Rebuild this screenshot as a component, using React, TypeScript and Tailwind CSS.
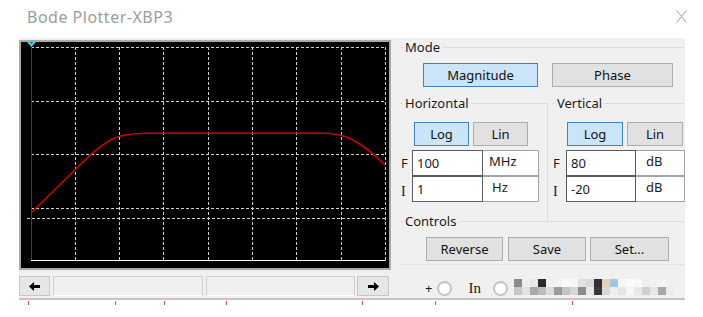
import React from "react";

const vGrid = [54.5, 98.5, 142.5, 187.5, 231.5, 275.5, 320.5, 364.5];
const hGrid = [5.5, 59.5, 112.5, 166.5];

const mosaicTop = [
  "bg-[#8a8a8a]", "bg-[#eeeeee]", "bg-[#e6e6e6]", "bg-[#2a2a2a]", "bg-[#f2f2f2]",
  "bg-[#f4f4f4]", "bg-[#fafafa]", "bg-[#f6f6f6]", "bg-[#e2e2e2]", "bg-[#d8d8d8]",
  "bg-[#303030]", "bg-[#e6d2b4]", "bg-[#9cc6ea]", "bg-[#f6f6f6]", "bg-[#fbfbfb]",
  "bg-[#f8f8f8]", "bg-[#eeeeee]", "bg-[#f2f2f2]", "bg-[#f4f4f4]", "bg-[#f0f0f0]",
];
const mosaicBottom = [
  "bg-[#c8c8c8]", "bg-[#e2e2e2]", "bg-[#a8a8a8]", "bg-[#bdbdbd]", "bg-[#dcdcdc]",
  "bg-[#9a9a9a]", "bg-[#c4c4c4]", "bg-[#d6d6d6]", "bg-[#8c8c8c]", "bg-[#e8e8e8]",
  "bg-[#3a3a3a]", "bg-[#d8d8d8]", "bg-[#eeeeee]", "bg-[#e4e4e4]", "bg-[#f6f6f6]",
  "bg-[#e8e8e8]", "bg-[#cfcfcf]", "bg-[#e6e6e6]", "bg-[#a8a8a8]", "bg-[#ececec]",
];

const ticks = [28, 86, 48, 61, 135, 72, 136];

function Btn({
  label,
  active,
  className,
}: {
  label: string;
  active?: boolean;
  className: string;
}) {
  return (
    <button
      className={`h-[24px] border text-[13px] leading-none text-[#111] ${
        active
          ? "border-[#3d84c8] bg-[#cce4f7]"
          : "border-[#adadad] bg-[#e1e1e1]"
      } ${className}`}
    >
      {label}
    </button>
  );
}

function Legend({ children }: { children: React.ReactNode }) {
  return (
    <legend className="ml-[3px] px-[2px] text-[13px] leading-[16px] text-[#1a1a1a]">
      {children}
    </legend>
  );
}

function Field({
  label,
  value,
  unit,
  labelW,
  valueW,
  unitW,
  unitPad,
}: {
  label: "F" | "I";
  value: string;
  unit: string;
  labelW: string;
  valueW: string;
  unitW: string;
  unitPad: string;
}) {
  return (
    <div className="flex h-[26px]">
      <span
        className={`${labelW} pl-[1px] text-[13px] ${
          label === "I"
            ? "pt-[7px] font-['Liberation_Serif',serif] text-[14px] leading-[18px]"
            : "pt-[4px] leading-[18px]"
        }`}
      >
        {label}
      </span>
      <div
        className={`${valueW} border border-[#5c5c5c] bg-white pl-[4px] pt-[3px] text-[13px] leading-[18px]`}
      >
        {value}
      </div>
      <div
        className={`${unitW} ${unitPad} border border-l-0 border-[#a4a4a4] bg-white pt-[1px] text-[13px] leading-[18px]`}
      >
        {unit}
      </div>
    </div>
  );
}

function Plot() {
  return (
    <div className="mt-[2px] h-[230px] w-[372px] border-2 border-[#a9a9a9] bg-black">
      <svg width="368" height="226" viewBox="0 0 368 226" className="block">
        <g stroke="#d2d2d2" strokeWidth="1" strokeDasharray="3 2">
          {vGrid.map((x) => (
            <line key={x} x1={x} y1="5" x2={x} y2="218" />
          ))}
          {hGrid.map((y) => (
            <line key={y} x1="10" y1={y} x2="364.5" y2={y} />
          ))}
          <line x1="6" y1="176.5" x2="364.5" y2="176.5" />
        </g>
        <line x1="10" y1="218.5" x2="364.5" y2="218.5" stroke="#ffffff" />
        <line x1="10.5" y1="3" x2="10.5" y2="218" stroke="#d40000" />
        <path
          d="M10 171 L60 122 C74 108 86 98 98 94.5 C107 92 114 91.4 126 91.3 L302 91.3 C312 91.4 319 92.5 327 95.5 C339 101 352 111 364 123"
          fill="none"
          stroke="#d40000"
          strokeWidth="1.6"
        />
        <polygon points="6,0 15,0 10.5,5" fill="#38d8e0" />
        <polygon points="9,0 12,0 10.5,2" fill="#0a6a78" />
      </svg>
    </div>
  );
}

function Arrow({ dir }: { dir: "left" | "right" }) {
  return (
    <svg
      width="11"
      height="9"
      viewBox="0 0 11 9"
      className={dir === "right" ? "rotate-180" : ""}
    >
      <polygon points="0,4.5 5,0 5,3 11,3 11,6 5,6 5,9" fill="#000" />
    </svg>
  );
}

function ScrollBar() {
  return (
    <div className="flex w-[372px]">
      <div className="flex w-[31px] items-center justify-center border border-[#c6c6c6] bg-[#e6e6e6]">
        <Arrow dir="left" />
      </div>
      <div className="ml-[3px] w-[150px] border border-[#d0d0d0] border-b-white bg-[#efefef]" />
      <div className="ml-[3px] w-[149px] border border-[#d0d0d0] border-b-white bg-[#efefef]" />
      <div className="ml-[2px] flex w-[32px] items-center justify-center border border-[#c6c6c6] bg-[#e6e6e6]">
        <Arrow dir="right" />
      </div>
    </div>
  );
}

function Probes() {
  return (
    <div className="flex items-center pl-[34px] pt-[4px]">
      <span className="text-[13px] leading-none">+</span>
      <span className="ml-[5px] h-[15px] w-[15px] rounded-full border-2 border-[#c4c4c4] bg-white" />
      <span className="ml-[16px] font-['Liberation_Serif',serif] text-[15px] leading-none">
        In
      </span>
      <span className="ml-[12px] h-[15px] w-[15px] rounded-full border-2 border-[#c4c4c4] bg-white" />
      <div className="-mt-[2px] ml-[6px] grid grid-cols-[repeat(20,8px)] grid-rows-[8px_8px]">
        {mosaicTop.map((c, i) => (
          <span key={`t${i}`} className={c} />
        ))}
        {mosaicBottom.map((c, i) => (
          <span key={`b${i}`} className={c} />
        ))}
      </div>
    </div>
  );
}

function RightPanel() {
  return (
    <div className="w-[294px] pl-[9px]">
      <fieldset className="mt-[1px] border-t border-[#dcdcdc]">
        <Legend>Mode</Legend>
        <div className="mt-[8px] flex pl-[23px]">
          <Btn label="Magnitude" active className="w-[115px]" />
          <Btn label="Phase" className="ml-[14px] w-[121px]" />
        </div>
      </fieldset>

      <div className="mt-[8px] flex">
        <fieldset className="w-[148px] border-r border-t border-[#dcdcdc] pb-[19px]">
          <Legend>Horizontal</Legend>
          <div className="mt-[11px] flex gap-[4px] pl-[14px]">
            <Btn label="Log" active className="w-[55px]" />
            <Btn label="Lin" className="w-[55px]" />
          </div>
          <div className="mt-[4px]">
            <Field label="F" value="100" unit="MHz" labelW="w-[12px]" valueW="w-[71px]" unitW="w-[56px]" unitPad="pl-[6px]" />
            <Field label="I" value="1" unit="Hz" labelW="w-[12px]" valueW="w-[71px]" unitW="w-[56px]" unitPad="pl-[9px]" />
          </div>
        </fieldset>
        <fieldset className="ml-[4px] flex-1 border-t border-[#dcdcdc]">
          <Legend>Vertical</Legend>
          <div className="mt-[11px] flex gap-[4px] pl-[15px]">
            <Btn label="Log" active className="w-[56px]" />
            <Btn label="Lin" className="w-[56px]" />
          </div>
          <div className="mt-[4px]">
            <Field label="F" value="80" unit="dB" labelW="w-[14px]" valueW="w-[70px]" unitW="w-[49px]" unitPad="pl-[10px]" />
            <Field label="I" value="-20" unit="dB" labelW="w-[14px]" valueW="w-[70px]" unitW="w-[49px]" unitPad="pl-[10px]" />
          </div>
        </fieldset>
      </div>

      <fieldset className="-mt-[8px] border-b border-t border-[#dcdcdc] border-b-[#e4e4e4] pb-[3px]">
        <Legend>Controls</Legend>
        <div className="mt-[8px] flex pl-[26px]">
          <Btn label="Reverse" className="w-[77px]" />
          <Btn label="Save" className="ml-[5px] w-[78px]" />
          <Btn label="Set..." className="ml-[4px] w-[79px]" />
        </div>
      </fieldset>
    </div>
  );
}

export default function App() {
  return (
    <div className="h-[317px] w-[703px] overflow-hidden bg-white font-['Noto_Sans',sans-serif] text-[#1a1a1a]">
      <header className="flex h-[38px] items-start pt-[8px]">
        <h1 className="pl-[27px] text-[16px] leading-[18px] tracking-[0.5px] text-[#9c9c9c]">
          Bode Plotter-XBP3
        </h1>
        <svg
          width="11"
          height="13"
          viewBox="0 0 11 13"
          className="ml-auto mr-[16px] mt-[2px]"
        >
          <path d="M0.5 0.5 L10.5 12.5 M10.5 0.5 L0.5 12.5" stroke="#a0a0a0" strokeWidth="1" fill="none" />
        </svg>
      </header>

      <div className="ml-[19px] w-[666px] border-b-2 border-[#c4c4c4] bg-[#f0f0f0] pb-[2px]">
        <div className="flex h-[232px]">
          <Plot />
          <RightPanel />
        </div>
        <div className="mt-[6px] flex h-[20px]">
          <ScrollBar />
          <Probes />
        </div>
      </div>

      <div className="mt-[1px] flex h-[4px]">
        {ticks.map((m, i) => (
          <span key={i} style={{ marginLeft: m }} className="w-px bg-[#d9455f]" />
        ))}
      </div>
    </div>
  );
}
